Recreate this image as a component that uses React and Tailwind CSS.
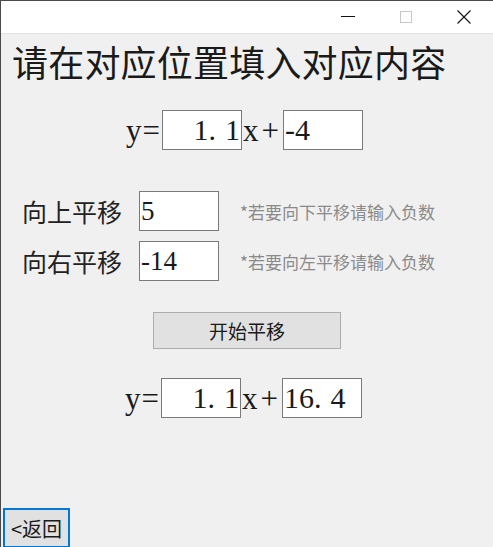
import React from "react";

const serif = { fontFamily: '"Liberation Serif", "Noto Sans CJK SC", serif' };

function Box({ children, align = "left" }) {
  return (
    <div
      className={`w-[80px] h-[40px] bg-white border border-[#7a7a7a] flex items-center text-[30px] leading-none text-[#1a1a1a] ${
        align === "right" ? "justify-end pr-[1px]" : "justify-start pl-[1px]"
      }`}
      style={serif}
    >
      {children}
    </div>
  );
}

function Num({ v }) {
  const parts = v.split(".");
  if (parts.length === 1) return <span>{v}</span>;
  return (
    <span>
      {parts[0]}
      <span className="mr-[9px]">.</span>
      {parts[1]}
    </span>
  );
}

function Equation({ a, b, left }) {
  return (
    <div className="flex items-center h-[40px]">
      <span
        className={`${left} w-[40px] text-right text-[31px] leading-none text-[#1a1a1a] pr-[1px] tracking-[1px]`}
        style={serif}
      >
        y=
      </span>
      <Box align="right">
        <Num v={a} />
      </Box>
      <span
        className="w-[41px] pl-[1px] text-left text-[31px] leading-none text-[#1a1a1a] tracking-[3px]"
        style={serif}
      >
        x+
      </span>
      <Box>
        <Num v={b} />
      </Box>
    </div>
  );
}

function ShiftRow({ label, value, hint }) {
  return (
    <div className="flex items-center h-[40px]">
      <span className="w-[138px] pl-[21px] text-[25px] leading-none text-[#222]">
        {label}
      </span>
      <Box>
        <span className="text-[27px]">{value}</span>
      </Box>
      <span className="ml-[21px] text-[17px] leading-none text-[#8a8a8a]">
        {hint}
      </span>
    </div>
  );
}

export default function App() {
  return (
    <div
      className="w-[493px] h-[547px] overflow-hidden bg-[#f0f0f0] border-l border-t border-[#4a4a4a] flex flex-col"
      style={{ fontFamily: '"Noto Sans CJK SC", "Noto Sans", sans-serif' }}
    >
      <div className="h-[33px] bg-white border-b border-[#e2e2e2] flex justify-end items-stretch shrink-0">
        <div className="w-[58px] flex items-center justify-center">
          <svg width="14" height="2" viewBox="0 0 14 2">
            <rect x="0" y="0" width="14" height="1" fill="#111" />
          </svg>
        </div>
        <div className="w-[58px] flex items-center justify-center">
          <svg width="12" height="12" viewBox="0 0 12 12">
            <rect x="0.5" y="0.5" width="11" height="11" fill="none" stroke="#c8c8c8" strokeWidth="1" />
          </svg>
        </div>
        <div className="w-[58px] flex items-center justify-center">
          <svg width="14" height="14" viewBox="0 0 14 14">
            <path d="M0.5 0.5 L13.5 13.5 M13.5 0.5 L0.5 13.5" stroke="#111" strokeWidth="1.1" />
          </svg>
        </div>
      </div>

      <div className="mt-[7px] h-[40px] pl-[11px] text-[36px] leading-[40px] text-[#1a1a1a] whitespace-nowrap tracking-[0.2px]">
        请在对应位置填入对应内容
      </div>

      <div className="mt-[29px]">
        <Equation a="1.1" b="-4" left="ml-[121px]" />
      </div>

      <div className="mt-[41px] flex flex-col gap-[10px]">
        <ShiftRow label="向上平移" value="5" hint="*若要向下平移请输入负数" />
        <ShiftRow label="向右平移" value="-14" hint="*若要向左平移请输入负数" />
      </div>

      <div className="mt-[31px] pl-[152px]">
        <button className="w-[188px] h-[37px] bg-[#e1e1e1] border border-[#adadad] text-[19px] leading-none text-[#1a1a1a] flex items-center justify-center">
          开始平移
        </button>
      </div>

      <div className="mt-[29px]">
        <Equation a="1.1" b="16.4" left="ml-[120px]" />
      </div>

      <div className="mt-[90px] pl-[2px] shrink-0">
        <button className="w-[67px] h-[40px] bg-[#e1e1e1] border-2 border-[#0078d7] text-[20px] leading-none text-[#1a1a1a] flex items-start pt-[9px] justify-center">
          &lt;返回
        </button>
      </div>
    </div>
  );
}
